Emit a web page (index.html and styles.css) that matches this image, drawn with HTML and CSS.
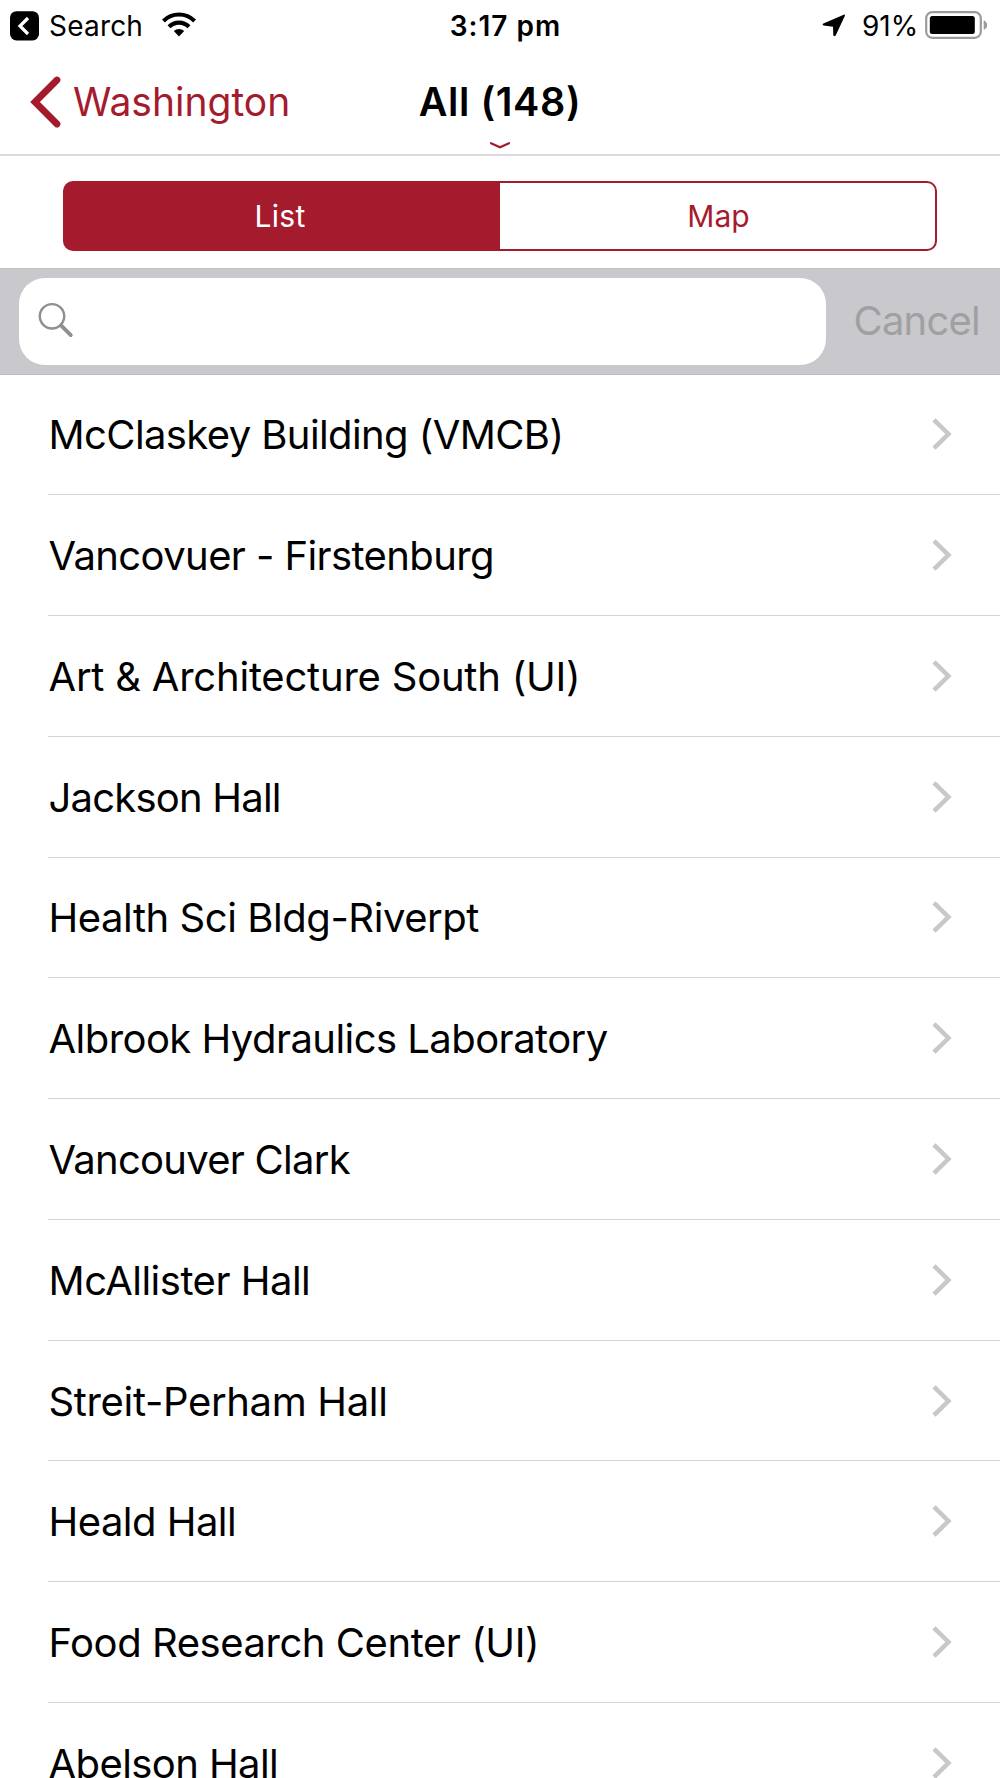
FILE: index.html
```html
<!DOCTYPE html>
<html lang="en">
<head>
<meta charset="utf-8">
<title>All (148)</title>
<link rel="stylesheet" href="styles.css">
</head>
<body>
<div class="screen">
  <header class="status">
    <div class="status-left">
      <svg class="return" viewBox="0 0 30 30"><rect x="0" y="0.2" width="29" height="29.3" rx="6.5"/><path d="M18 7L10 15l8 8" fill="none" stroke="#fff" stroke-width="3.2"/></svg>
      <span class="app">Search</span>
      <svg class="wifi" viewBox="0 0 34 25"><g fill="none" stroke="#000" stroke-width="4.2"><path d="M1.4 9a22 22 0 0 1 31.2 0"/><path d="M7 14.8a14.2 14.2 0 0 1 20 0"/></g><path d="M17 24.4l-5.2-5.3a7.5 7.5 0 0 1 10.4 0z"/></svg>
    </div>
    <span class="time">3:17 pm</span>
    <div class="status-right">
      <svg class="location" viewBox="0 0 24 24"><path d="M21.700 0.700Q23.400 0.300 22.800 2L13.800 21.300Q12.200 23 11.300 21.300L11 12.700 1.700 11.600Q-.3 10.600 1.400 9.400z"/></svg>
      <span class="percent">91%</span>
      <svg class="battery" viewBox="0 0 64 28"><rect x="1.200" y="1.200" width="54.600" height="25.600" rx="6" fill="none" stroke="#9b9b9b" stroke-width="2.200"/><rect x="4.800" y="5" width="45" height="18" rx="2.500"/><path d="M58.700 9.200q3.400 1.300 3.400 4.900t-3.400 4.900z" fill="#9b9b9b"/></svg>
    </div>
  </header>
  <nav class="nav">
    <a class="back"><svg class="back-icon" viewBox="0 0 32 54"><path d="M27 5L5 27l22 22" fill="none" stroke="#a51b2e" stroke-width="6.800" stroke-linecap="round"/></svg><span class="back-label">Washington</span></a>
    <h1 class="title">All (148)</h1>
    <svg class="more" viewBox="0 0 20 8"><path d="M1 1.200l9 4 9-4" fill="none" stroke="#a51b2e" stroke-width="2.300" stroke-linecap="round"/></svg>
  </nav>
  <div class="segments">
    <div class="segmented"><span class="segment active">List</span><span class="segment">Map</span></div>
  </div>
  <div class="searchbar">
    <div class="field"><svg class="glass" viewBox="0 0 36 36"><g fill="none" stroke="#8e8e93"><circle cx="14" cy="14.300" r="12.200" stroke-width="2.400"/><path d="M23 23.300l9.800 9.800" stroke-width="3.800" stroke-linecap="round"/></g></svg></div>
    <span class="cancel">Cancel</span>
  </div>
  <ul class="list">
    <li class="row"><span class="name n1">McClaskey Building (VMCB)</span><svg class="chev" viewBox="0 0 20 32"><path d="M2 1.800L16.400 16 2 30.200"/></svg></li>
    <li class="row"><span class="name n2">Vancovuer - Firstenburg</span><svg class="chev" viewBox="0 0 20 32"><path d="M2 1.800L16.400 16 2 30.200"/></svg></li>
    <li class="row"><span class="name n3">Art &amp; Architecture South (UI)</span><svg class="chev" viewBox="0 0 20 32"><path d="M2 1.800L16.400 16 2 30.200"/></svg></li>
    <li class="row"><span class="name n4">Jackson Hall</span><svg class="chev" viewBox="0 0 20 32"><path d="M2 1.800L16.400 16 2 30.200"/></svg></li>
    <li class="row"><span class="name n5">Health Sci Bldg-Riverpt</span><svg class="chev" viewBox="0 0 20 32"><path d="M2 1.800L16.400 16 2 30.200"/></svg></li>
    <li class="row"><span class="name n6">Albrook Hydraulics Laboratory</span><svg class="chev" viewBox="0 0 20 32"><path d="M2 1.800L16.400 16 2 30.200"/></svg></li>
    <li class="row"><span class="name n7">Vancouver Clark</span><svg class="chev" viewBox="0 0 20 32"><path d="M2 1.800L16.400 16 2 30.200"/></svg></li>
    <li class="row"><span class="name n8">McAllister Hall</span><svg class="chev" viewBox="0 0 20 32"><path d="M2 1.800L16.400 16 2 30.200"/></svg></li>
    <li class="row"><span class="name n9">Streit-Perham Hall</span><svg class="chev" viewBox="0 0 20 32"><path d="M2 1.800L16.400 16 2 30.200"/></svg></li>
    <li class="row"><span class="name n10">Heald Hall</span><svg class="chev" viewBox="0 0 20 32"><path d="M2 1.800L16.400 16 2 30.200"/></svg></li>
    <li class="row"><span class="name n11">Food Research Center (UI)</span><svg class="chev" viewBox="0 0 20 32"><path d="M2 1.800L16.400 16 2 30.200"/></svg></li>
    <li class="row"><span class="name n12">Abelson Hall</span><svg class="chev" viewBox="0 0 20 32"><path d="M2 1.800L16.400 16 2 30.200"/></svg></li>
  </ul>
</div>
</body>
</html>
```
FILE: styles.css
```css
* { box-sizing: border-box; }
body { margin: 0; background: #fff; color: #000; font-family: Inter, "Liberation Sans", sans-serif; }
svg { display: block; flex: none; }
span, h1 { white-space: nowrap; }
.screen { width: 1000px; height: 1778px; overflow: hidden; }
.status { height: 51px; display: grid; grid-template-columns: 1fr auto 1fr; align-items: center; font-size: 28px; line-height: 34px; padding: 0 11px 0 10px; }
.status-left, .status-right { display: flex; align-items: center; }
.status-right { justify-content: flex-end; }
.return { width: 30px; height: 30px; }
.app { margin-left: 9px; width: 94px; letter-spacing: 0.2px; }
.wifi { width: 34px; height: 25px; margin-left: 19px; margin-top: -3px; }
.time { font-weight: 600; padding-left: 12px; letter-spacing: 1px; }
.location { width: 24px; height: 24px; }
.percent { margin-left: 16px; width: 55px; letter-spacing: 0; }
.battery { width: 64px; height: 28px; margin-left: 8px; margin-top: -2px; }
.nav { height: 105px; border-bottom: 2px solid #dcdcdc; display: grid; grid-template-columns: 1fr auto 1fr; grid-template-rows: 91px 8px; font-size: 39px; }
.back { display: flex; align-items: center; padding: 10px 0 0 30px; color: #a51b2e; }
.back-icon { width: 32px; height: 54px; }
.back-label { margin-left: 11px; line-height: 48px; }
.title { margin: 0; padding-top: 11px; line-height: 81px; font-size: 39.500px; font-weight: 600; letter-spacing: 0.600px; }
.more { grid-column: 2; grid-row: 2; justify-self: center; width: 20px; height: 8px; }
.segments { height: 112px; padding: 25px 63px 0; }
.segmented { height: 70px; border: 2px solid #a51b2e; border-radius: 10px; display: grid; grid-template-columns: 1fr 1fr; background: linear-gradient(90deg, #a51b2e 50%, #fff 50%) border-box; }
.segment { font-size: 30px; line-height: 67px; text-align: center; color: #a51b2e; padding-left: 2px; }
.segment.active { color: #fff; letter-spacing: 0.300px; padding: 0 5px 0 0; }
.searchbar { height: 106.500px; background: #c9c8cd; border-top: 1px solid #c1c1c3; border-bottom: 1px solid #bdbdc1; display: flex; padding: 9px 0 0 19px; }
.field { flex: none; width: 807px; height: 87px; background: #fff; border-radius: 26px; padding: 24px 0 0 19px; }
.glass { width: 36px; height: 36px; }
.cancel { margin-left: 27.500px; font-size: 40px; line-height: 85px; letter-spacing: -0.800px; color: #a0a0a2; }
.list { list-style: none; margin: 0; padding: 0 0 0 48px; }
.row { height: 120.770px; display: flex; align-items: center; justify-content: space-between; border-bottom: 1.500px solid #d3d3d4; padding: 0 48px 0 0.500px; }
.name { font-size: 40px; line-height: 48px; padding-top: 2px; }
.n1 { letter-spacing: -0.600px; }
.n2 { letter-spacing: -0.600px; }
.n3 { letter-spacing: -0.220px; }
.n4 { letter-spacing: -0.780px; }
.n5 { letter-spacing: -0.440px; }
.n6 { letter-spacing: -0.550px; }
.n7 { letter-spacing: -0.740px; }
.n8 { letter-spacing: -0.500px; }
.n9 { letter-spacing: -0.340px; }
.n10 { letter-spacing: -0.520px; }
.n11 { letter-spacing: -0.450px; }
.n12 { letter-spacing: -0.580px; }
.chev { width: 20px; height: 32px; }
.chev path { fill: none; stroke: #c7c7cc; stroke-width: 4.500; }
```
